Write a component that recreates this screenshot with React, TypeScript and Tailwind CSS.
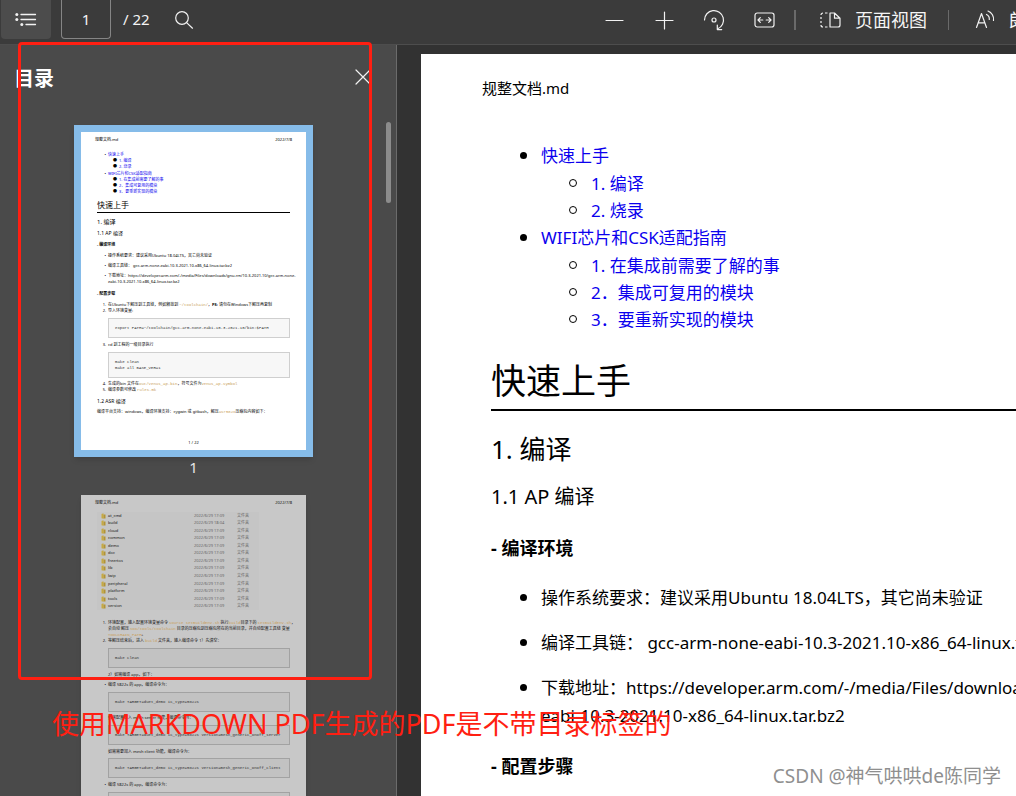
import React from 'react';

interface FileRow {
  name: string;
  time: string;
}

interface TocEntry {
  title: string;
  children: string[];
}

const toc: TocEntry[] = [
  { title: '快速上手', children: ['1. 编译', '2. 烧录'] },
  { title: 'WIFI芯片和CSK适配指南', children: ['1. 在集成前需要了解的事', '2．集成可复用的模块', '3．要重新实现的模块'] },
];

const files: FileRow[] = [
  { name: 'at_cmd', time: '17:09' },
  { name: 'build', time: '18:04' },
  { name: 'cloud', time: '17:09' },
  { name: 'common', time: '17:09' },
  { name: 'demo', time: '17:09' },
  { name: 'doc', time: '17:09' },
  { name: 'freertos', time: '17:09' },
  { name: 'lib', time: '17:09' },
  { name: 'lwip', time: '17:09' },
  { name: 'peripheral', time: '17:09' },
  { name: 'platform', time: '17:09' },
  { name: 'tools', time: '17:09' },
  { name: 'version', time: '17:09' },
];

/* ---------- Toolbar ---------- */

const Icon: React.FC<{ size?: number; children: React.ReactNode }> = ({ size = 20, children }) => (
  <svg width={size} height={size} viewBox="0 0 20 20" fill="none" stroke="#f2f2f2" strokeWidth="1.2" strokeLinecap="round" aria-hidden="true">
    {children}
  </svg>
);

const ToolButton: React.FC<{ label: string; children: React.ReactNode }> = ({ label, children }) => (
  <button type="button" aria-label={label} className="flex h-[39px] w-[50px] shrink-0 items-center justify-center">
    {children}
  </button>
);

const Toolbar = () => (
  <header className="flex h-[45px] shrink-0 items-start border-b border-[#4d4d4d] bg-[#3b3b3b] text-[#f5f5f5]">
    <div className="flex min-w-0 flex-1 items-center pl-px">
      <button type="button" aria-label="目录" className="flex h-[39px] w-[50px] shrink-0 items-center justify-center rounded-b bg-[#4c4c4c]">
        <svg width="22" height="16" viewBox="0 0 22 16" stroke="#f2f2f2" strokeWidth="1.3" strokeLinecap="round" aria-hidden="true">
          <path d="M6 2.500h14.500M6 7.500h14.500M11 12.500h9.500" />
          <g fill="#f2f2f2" stroke="none">
            <circle cx="1.800" cy="2.500" r="1.500" />
            <circle cx="1.800" cy="7.500" r="1.500" />
            <circle cx="6.800" cy="12.500" r="1.500" />
          </g>
        </svg>
      </button>
      <input
        aria-label="页码"
        defaultValue="1"
        className="ml-[10px] h-[39px] w-[50px] shrink-0 rounded-b border border-t-0 border-[#858585] bg-transparent text-center text-[15px]"
      />
      <span className="ml-3 whitespace-nowrap text-[15px]">/ 22</span>
      <button type="button" aria-label="查找" className="ml-3 flex h-[39px] w-11 shrink-0 items-center justify-center">
        <Icon>
          <circle cx="8" cy="8" r="6.3" />
          <path d="M12.600 12.600l5.900 5.600" />
        </Icon>
      </button>
    </div>
    <div className="flex w-[427px] shrink-0 items-center overflow-hidden">
      <ToolButton label="缩小">
        <Icon><path d="M2 10.500h17" /></Icon>
      </ToolButton>
      <ToolButton label="放大">
        <Icon><path d="M2 10.500h17M10.500 2v17" /></Icon>
      </ToolButton>
      <ToolButton label="旋转">
        <svg width="22" height="22" viewBox="0 0 22 22" fill="none" stroke="#f2f2f2" strokeWidth="1.2" strokeLinecap="round" strokeLinejoin="round" aria-hidden="true">
          <path d="M1.500 11a9.500 9.500 0 1 1 13.200 8.800" />
          <path d="M14.300 16v4.600h4.400" />
          <circle cx="11" cy="11" r="2" />
        </svg>
      </ToolButton>
      <ToolButton label="适合宽度">
        <svg width="21" height="16" viewBox="0 0 21 16" fill="none" stroke="#f2f2f2" strokeWidth="1.2" strokeLinecap="round" strokeLinejoin="round" aria-hidden="true">
          <rect x="1" y="1" width="19" height="14" rx="2.2" />
          <path d="M4 8h4.800M6.300 5.700L4 8l2.300 2.300M17 8h-4.800M14.700 5.700L17 8l-2.300 2.300" />
        </svg>
      </ToolButton>
      <span className="ml-[5px] h-5 w-0.5 shrink-0 bg-[#6a6a6a]" />
      <button type="button" className="ml-6 flex h-[39px] shrink-0 items-center gap-[14px] whitespace-nowrap text-lg">
        <svg width="21" height="16" viewBox="0 0 21 16" fill="none" stroke="#f2f2f2" strokeWidth="1.2" strokeLinejoin="round" aria-hidden="true">
          <path d="M10 1h4.500L20 6.200v6.800a2 2 0 0 1-2 2h-8zM14.500 1v5.200h5.500" />
          <path d="M7.500 1H5M3 1a2 2 0 0 0-2 2M1 5v2M1 9v2M1 13a2 2 0 0 0 2 2M5 15h2.500" />
        </svg>
        页面视图
      </button>
      <span className="ml-[21px] h-5 w-px shrink-0 bg-[#6a6a6a]" />
      <button type="button" className="ml-[26px] flex h-[39px] shrink-0 items-center gap-[13px] whitespace-nowrap text-lg">
        <svg width="21" height="20" viewBox="0 0 21 20" fill="none" stroke="#f2f2f2" strokeWidth="1.2" strokeLinecap="round" strokeLinejoin="round" aria-hidden="true">
          <path d="M1.500 17.500L6.500 3.500 11.500 17.500M3.200 12.800h6.600" />
          <path d="M11.500 4.500a5 5 0 0 1 2.800 5M13 1a8.800 8.800 0 0 1 5.500 9.500" />
        </svg>
        朗读此页内容
      </button>
    </div>
  </header>
);

/* ---------- Thumbnails ---------- */

const Code: React.FC<{ children: React.ReactNode }> = ({ children }) => (
  <code className="font-['Liberation_Mono','Noto_Sans_CJK_SC',monospace] text-[#c9a05a]">{children}</code>
);

const ThumbCode: React.FC<{ dark?: boolean; children: React.ReactNode }> = ({ dark, children }) => (
  <pre
    className={`ml-[11px] border px-1.5 py-1.5 font-['Liberation_Mono',monospace] leading-[6px] text-[#333] ${
      dark ? 'border-[#a2a2a2] bg-[#c2c2c2]' : 'border-[#cfcfcf] bg-[#f7f7f7]'
    }`}
  >
    {children}
  </pre>
);

const ThumbItem: React.FC<{ mark: string; children: React.ReactNode }> = ({ mark, children }) => (
  <li className="flex">
    <span className="w-[11px] shrink-0 pr-0.5 text-right">{mark}</span>
    <span>{children}</span>
  </li>
);

const ThumbHeader = () => (
  <div className="flex justify-between px-3.5 pt-[5px]">
    <span>规整文档.md</span>
    <span>2022/7/8</span>
  </div>
);

const FirstThumb = () => (
  <div className="flex h-[318px] w-[225px] flex-col overflow-hidden whitespace-nowrap bg-white text-[4px] leading-[6px] text-black">
    <ThumbHeader />
    <div className="flex-1 px-4 pt-[9px]">
      <ul className="space-y-px text-[#0b00ee]">
        {toc.map(entry => (
          <li key={entry.title}>
            <div className="flex"><span className="w-[11px] pr-0.5 text-right text-black">•</span>{entry.title}</div>
            <ul>
              {entry.children.map(child => (
                <li key={child} className="flex"><span className="w-[22px] pr-0.5 text-right text-black">●</span>{child}</li>
              ))}
            </ul>
          </li>
        ))}
      </ul>
      <h2 className="mt-[3px] border-b border-black pb-px text-[8px] leading-[13px]">快速上手</h2>
      <h3 className="mt-[5px] text-[6px] leading-[8px]">1. 编译</h3>
      <h4 className="mt-1 text-[5px] leading-[6px]">1.1 AP 编译</h4>
      <p className="mt-[6px] font-bold">- 编译环境</p>
      <ul className="mt-[5px] space-y-1">
        <ThumbItem mark="•">操作系统要求：建议采用Ubuntu 18.04LTS，其它尚未验证</ThumbItem>
        <ThumbItem mark="•">编译工具链： gcc-arm-none-eabi-10.3-2021.10-x86_64-linux.tar.bz2</ThumbItem>
        <ThumbItem mark="•">
          下载地址：https://developer.arm.com/-/media/Files/downloads/gnu-rm/10.3-2021.10/gcc-arm-none-
          <br />
          eabi-10.3-2021.10-x86_64-linux.tar.bz2
        </ThumbItem>
      </ul>
      <p className="mt-[6px] font-bold">- 配置步骤</p>
      <ol className="mt-[5px]">
        <ThumbItem mark="1.">在Ubuntu下解压到工具链，例如释放到 <Code>~/toolchain/</Code>，<b>PS:</b> 请勿在Windows下解压再复制</ThumbItem>
        <ThumbItem mark="2.">导入环境变量:</ThumbItem>
      </ol>
      <div className="mt-1"><ThumbCode>export PATH=~/toolchain/gcc-arm-none-eabi-10.3-2021.10/bin:$PATH</ThumbCode></div>
      <ol className="mt-1"><ThumbItem mark="3.">cd 到工程的一级目录执行</ThumbItem></ol>
      <div className="mt-1"><ThumbCode>{'make clean\nmake all BASE_VER=1'}</ThumbCode></div>
      <ol className="mt-[3px]">
        <ThumbItem mark="4.">生成的bin 文件在<Code>out/venus_ap.bin</Code>，符号文件为<Code>venus_ap.symbol</Code></ThumbItem>
        <ThumbItem mark="5.">编译参数可修改 <Code>rules.mk</Code></ThumbItem>
      </ol>
      <h4 className="mt-[5px] text-[5px] leading-[6px]">1.2 ASR 编译</h4>
      <p className="mt-[5px]">编译平台支持：windows，编译环境支持：cygwin 或 gitbash，解压<Code>asr582x</Code>压缩包内容如下：</p>
    </div>
    <div className="pb-1 text-center">1 / 22</div>
  </div>
);

const SecondThumb = () => (
  <div className="h-[318px] w-[225px] overflow-hidden whitespace-nowrap bg-[#c8c8c8] text-[4px] leading-[6px] text-[#111]">
    <ThumbHeader />
    <div className="px-4 pt-1.5">
      <table className="h-[98px] w-[162px] bg-[#c5c5c5]">
        <tbody>
          {files.map(file => (
            <tr key={file.name}>
              <td className="w-[11px] pl-1">
                <svg width="5" height="6" viewBox="0 0 5 6" aria-hidden="true">
                  <path d="M.5 1l2-.8v5.600l-2-.5z" fill="#c7aa42" />
                  <path d="M2.500 1.500h2v4h-2z" fill="#b39434" />
                </svg>
              </td>
              <td className="w-[86px]">{file.name}</td>
              <td className="w-[43px] text-[#666]">2022/6/29 {file.time}</td>
              <td className="text-[#666]">文件夹</td>
            </tr>
          ))}
        </tbody>
      </table>
      <ol className="mt-2.5">
        <ThumbItem mark="1.">
          环境配置，输入配置环境变量命令 <Code>source setBuildEnv.sh</Code> 执行<Code>build</Code>目录下的 <Code>setBuildEnv.sh</Code>，
          <br />
          会自动 解压 <Code>SDK/tools/toolchain</Code> 目录的压缩包到压缩包所在的当前目录，并自动配置工具链 变量
          <br />
          <Code>TOOLCHAIN_PATH</Code>。
        </ThumbItem>
        <ThumbItem mark="2.">等解压结束后，进入 <Code>build</Code> 文件夹，输入编译命令 1）先清空：</ThumbItem>
      </ol>
      <div className="mt-1"><ThumbCode dark>make clean</ThumbCode></div>
      <p className="mt-1 pl-[11px]">2）如需编译 app，如下：</p>
      <ul className="mt-1"><ThumbItem mark="•">编译 5822s 的 app，编译命令为：</ThumbItem></ul>
      <div className="mt-1"><ThumbCode dark>make TARGET=duet_demo ic_type=5822s</ThumbCode></div>
      <p className="mt-[3px] pl-[11px]">如需配置加入 mesh server 功能，编译命令为：</p>
      <div className="mt-1"><ThumbCode dark>make TARGET=duet_demo ic_type=5822s version=mesh_generic_onoff_server</ThumbCode></div>
      <p className="mt-1 pl-[11px]">如需需要加入 mesh client 功能，编译命令为：</p>
      <div className="mt-[3px]"><ThumbCode dark>make TARGET=duet_demo ic_type=5822s version=mesh_generic_onoff_client</ThumbCode></div>
      <ul className="mt-1"><ThumbItem mark="•">编译 5822s 的 app，编译命令为：</ThumbItem></ul>
      <div className="mt-1"><ThumbCode dark>make TARGET=duet_demo</ThumbCode></div>
    </div>
  </div>
);

const Sidebar = () => (
  <aside className="relative flex w-[397px] shrink-0 flex-col overflow-hidden border-r border-[#6b6b6b] bg-[#4a4a4a]">
    <div className="flex h-[68px] shrink-0 items-center justify-between pl-3.5 pr-[25px]">
      <h2 className="text-xl font-bold text-white">目录</h2>
      <button type="button" aria-label="关闭" className="flex h-5 w-4 items-start">
        <svg width="16" height="16" viewBox="0 0 16 16" stroke="#f2f2f2" strokeWidth="1.2" strokeLinecap="round" aria-hidden="true">
          <path d="M1 1l14 14M15 1L1 15" />
        </svg>
      </button>
    </div>
    <div className="flex flex-col items-center pr-[9px] pt-3">
      <a href="#page-1" aria-label="第 1 页" className="bg-[#86bce9] p-[7px] shadow-md">
        <FirstThumb />
      </a>
      <span className="text-[15px] leading-5 text-[#e6e6e6]">1</span>
      <a href="#page-2" aria-label="第 2 页" className="mt-[18px] shadow-md">
        <SecondThumb />
      </a>
    </div>
    <div className="absolute right-[5px] top-[77px] h-[81px] w-[5px] rounded-full bg-[#8c8c8c]" />
  </aside>
);

/* ---------- Document ---------- */

const Item: React.FC<{ children: React.ReactNode }> = ({ children }) => (
  <li className="flex">
    <span className="mt-2.5 mr-3.5 ml-[29px] size-[7px] shrink-0 rounded-full bg-black" />
    <div>{children}</div>
  </li>
);

const DocumentPage = () => (
  <article id="page-1" className="w-[984px] shrink-0 whitespace-nowrap bg-white text-[17px] leading-7 text-black">
    <p className="pl-[61px] pt-6 text-[15px] leading-5">规整文档.md</p>
    <div className="px-[70px] pt-11">
      <ul className="text-[#0b00ee]">
        {toc.map(entry => (
          <Item key={entry.title}>
            <a href="#page-1">{entry.title}</a>
            <ul>
              {entry.children.map(child => (
                <li key={child} className="flex leading-[27px]">
                  <span className="mt-[9px] mr-3.5 ml-7 size-2 shrink-0 rounded-full border border-black" />
                  <a href="#page-1">{child}</a>
                </li>
              ))}
            </ul>
          </Item>
        ))}
      </ul>
      <h1 className="mt-6 border-b-2 border-black pb-1 text-[35px] leading-[48px]">快速上手</h1>
      <h2 className="mt-[18px] text-[26px] leading-10">1. 编译</h2>
      <h3 className="mt-3 text-xl leading-8">1.1 AP 编译</h3>
      <h4 className="mt-[21px] text-lg leading-7 font-bold">- 编译环境</h4>
      <ul className="mt-[22px] space-y-[17px]">
        <Item>操作系统要求：建议采用Ubuntu 18.04LTS，其它尚未验证</Item>
        <Item>编译工具链： gcc-arm-none-eabi-10.3-2021.10-x86_64-linux.tar.bz2</Item>
        <Item>
          下载地址：https://developer.arm.com/-/media/Files/downloads/gnu-rm/10.3-2021.10/gcc-arm-none-
          <br />
          eabi-10.3-2021.10-x86_64-linux.tar.bz2
        </Item>
      </ul>
      <h4 className="mt-[22px] text-lg leading-7 font-bold">- 配置步骤</h4>
    </div>
  </article>
);

const App = () => (
  <div className="relative flex h-screen flex-col overflow-hidden bg-[#323232] font-['Noto_Sans','Noto_Sans_CJK_SC',sans-serif]">
    <Toolbar />
    <div className="flex min-h-0 flex-1">
      <Sidebar />
      <main className="flex min-w-0 flex-1 overflow-hidden pl-6 pt-[9px]">
        <DocumentPage />
      </main>
    </div>

    {/* Annotations drawn over the reader */}
    <div className="pointer-events-none absolute left-[18px] top-[42px] h-[638px] w-[354px] rounded border-[3px] border-[#ff1f12]" />
    <p className="pointer-events-none absolute left-[52px] top-[706px] whitespace-nowrap text-[27px] leading-9 text-[#ff1f12]">
      使用MARKDOWN PDF生成的PDF是不带目录标签的
    </p>
    <p className="pointer-events-none absolute bottom-1.5 right-[15px] whitespace-nowrap text-[19px] leading-7 text-[#8f8f8f]">
      CSDN @神气哄哄de陈同学
    </p>
  </div>
);

export default App;
